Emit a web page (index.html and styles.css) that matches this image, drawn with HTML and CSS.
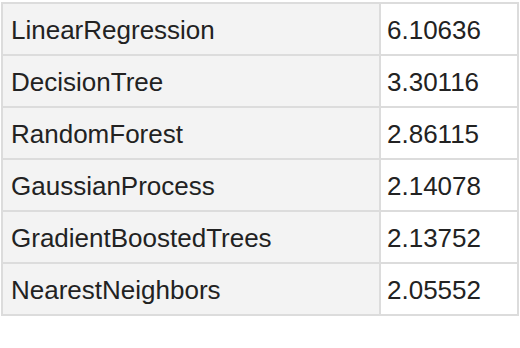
FILE: index.html
```html
<!DOCTYPE html>
<html>
<head>
<meta charset="utf-8">
<link rel="stylesheet" href="styles.css">
</head>
<body>
<div class="grid">
  <div class="name">LinearRegression</div><div class="val">6.10636</div>
  <div class="name">DecisionTree</div><div class="val">3.30116</div>
  <div class="name">RandomForest</div><div class="val">2.86115</div>
  <div class="name">GaussianProcess</div><div class="val">2.14078</div>
  <div class="name">GradientBoostedTrees</div><div class="val">2.13752</div>
  <div class="name">NearestNeighbors</div><div class="val">2.05552</div>
</div>
</body>
</html>
```
FILE: styles.css
```css
html, body {
  margin: 0;
  background: #ffffff;
}
body {
  padding: 2px 1px 0 1px;
  font-family: "Liberation Sans", Arial, sans-serif;
  font-size: 26px;
  color: #222222;
}
.grid {
  display: grid;
  grid-template-columns: 378px 138px;
  width: 518px;
  border-top: 2px solid #dcdcdc;
  border-left: 2px solid #dcdcdc;
  box-sizing: border-box;
}
.name, .val {
  height: 52px;
  box-sizing: border-box;
  border-right: 2px solid #dcdcdc;
  border-bottom: 2px solid #dcdcdc;
  display: flex;
  align-items: center;
  padding-left: 8px;
  padding-top: 2px;
}
.name {
  background: #f3f3f3;
}
.val {
  background: #ffffff;
  padding-left: 6px;
}
```
